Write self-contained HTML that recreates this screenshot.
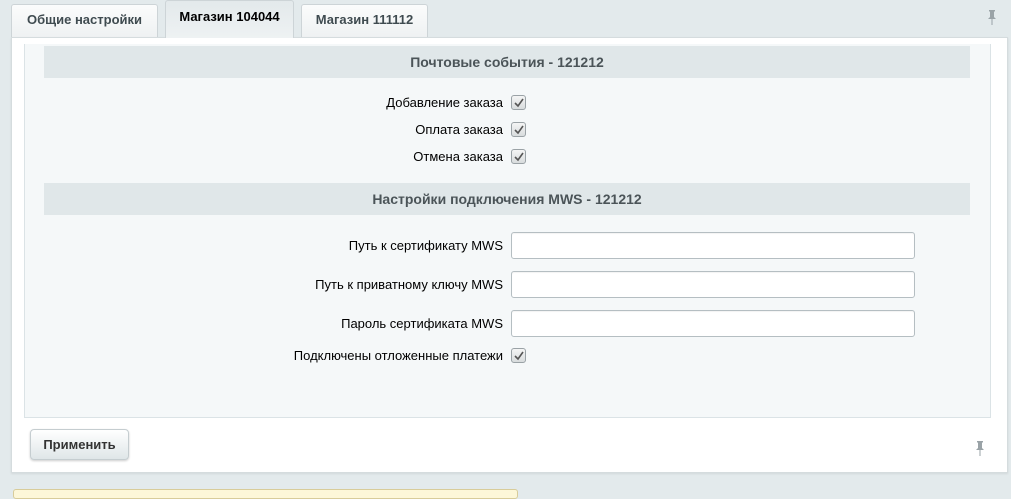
<!DOCTYPE html>
<html><head><meta charset="utf-8"><style>
*{box-sizing:border-box;margin:0;padding:0}
body{width:1011px;height:493px;background:#e3eaec;font-family:"Liberation Sans",Arial,sans-serif;font-size:13px;color:#000;position:relative;overflow:hidden}
.a{position:absolute}
.tab{position:absolute;border:1px solid #cdd4d7;border-bottom:none;border-radius:3px 3px 0 0;background:linear-gradient(#fbfcfc,#eef1f2);color:#3f4b50;font-weight:bold;font-size:13px;text-align:center}
.panel{left:11px;top:37px;width:997px;height:436px;background:#fff;border:1px solid #d5dcde;box-shadow:0 1px 2px rgba(0,0,0,.08)}
.inner{left:24px;top:44px;width:967px;height:374px;background:#f5f8f9;border:1px solid #dbe3e6;border-top:none}
.hdr{left:44px;width:926px;height:32px;background:#e0e7e9;color:#4b5458;font-weight:bold;font-size:14px;text-align:center;line-height:32px}
.lbl{right:508px;text-align:right;color:#000;white-space:nowrap}
.cb{left:511px;width:15px;height:15px;border:1px solid #9aa2a6;border-radius:3px;background:linear-gradient(#f4f5f5,#d8dcdd)}
.cb svg{position:absolute;left:1px;top:1px}
.inp{left:511px;width:404px;height:27px;border:1px solid #b5bec2;border-radius:3px;background:#fff;box-shadow:inset 0 1px 1px rgba(0,0,0,.05)}
</style></head><body>
<div class="tab" style="left:11px;top:4px;width:147px;height:34px;line-height:30px">Общие настройки</div>
<div class="tab" style="left:165px;top:0;width:129px;height:38px;line-height:32px;color:#000;background:linear-gradient(#e3e9eb,#eef2f3);z-index:2">Магазин 104044</div>
<div class="tab" style="left:301px;top:4px;width:127px;height:34px;line-height:30px">Магазин 111112</div>
<svg class="a" style="left:986px;top:9px" width="12" height="17" viewBox="0 0 12 17"><path d="M3 1h6v1l-1 1v5l2 2H2l2-2V3L3 2z" fill="#9aa3a7"/><rect x="5.5" y="10" width="1" height="6" fill="#9aa3a7"/></svg>
<div class="a panel"></div>
<div class="a inner"></div>
<div class="a hdr" style="top:46px">Почтовые события - 121212</div>
<div class="a lbl" style="top:95px">Добавление заказа</div>
<div class="a cb" style="top:95px"><svg width="12" height="11" viewBox="0 0 12 11"><path d="M2 6l3 3 5-7" stroke="#555" stroke-width="1.6" fill="none"/></svg></div>
<div class="a lbl" style="top:122px">Оплата заказа</div>
<div class="a cb" style="top:122px"><svg width="12" height="11" viewBox="0 0 12 11"><path d="M2 6l3 3 5-7" stroke="#555" stroke-width="1.6" fill="none"/></svg></div>
<div class="a lbl" style="top:149px">Отмена заказа</div>
<div class="a cb" style="top:149px"><svg width="12" height="11" viewBox="0 0 12 11"><path d="M2 6l3 3 5-7" stroke="#555" stroke-width="1.6" fill="none"/></svg></div>
<div class="a hdr" style="top:183px">Настройки подключения MWS - 121212</div>
<div class="a lbl" style="top:238px">Путь к сертификату MWS</div>
<div class="a inp" style="top:232px"></div>
<div class="a lbl" style="top:277px">Путь к приватному ключу MWS</div>
<div class="a inp" style="top:271px"></div>
<div class="a lbl" style="top:316px">Пароль сертификата MWS</div>
<div class="a inp" style="top:310px"></div>
<div class="a lbl" style="top:348px">Подключены отложенные платежи</div>
<div class="a cb" style="top:348px"><svg width="12" height="11" viewBox="0 0 12 11"><path d="M2 6l3 3 5-7" stroke="#555" stroke-width="1.6" fill="none"/></svg></div>
<div class="a" style="left:30px;top:429px;width:99px;height:31px;border:1px solid #c5cdd0;border-radius:4px;background:linear-gradient(#fff,#dfe6e8);box-shadow:0 1px 2px rgba(0,0,0,.2);text-align:center;line-height:29px;color:#333;font-weight:bold;font-size:13px">Применить</div>
<svg class="a" style="left:974px;top:440px" width="12" height="17" viewBox="0 0 12 17"><path d="M3 1h6v1l-1 1v5l2 2H2l2-2V3L3 2z" fill="#9aa3a7"/><rect x="5.5" y="10" width="1" height="6" fill="#9aa3a7"/></svg>
<div class="a" style="left:13px;top:489px;width:505px;height:10px;border:1px solid #d8cc9a;border-radius:3px;background:#fdf7d8"></div>
</body></html>
